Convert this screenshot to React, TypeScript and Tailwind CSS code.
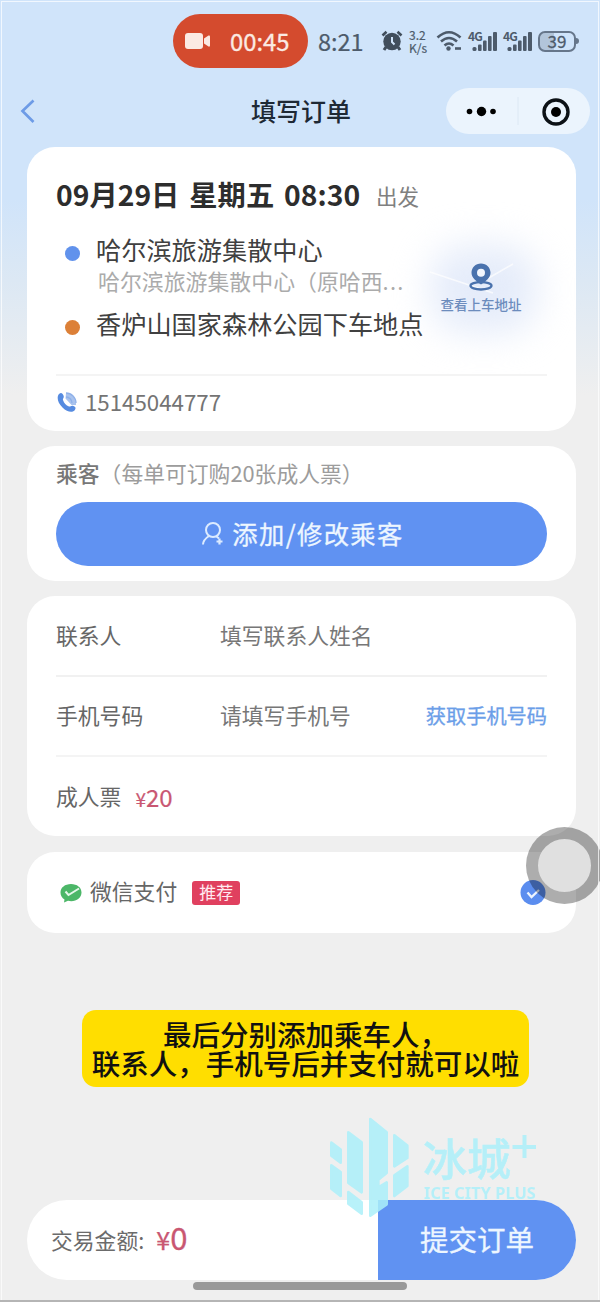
import type { ReactNode } from "react";

function Card({ className, children }: { className: string; children: ReactNode }) {
  return <section className={`w-full rounded-[28px] bg-white px-[29px] ${className}`}>{children}</section>;
}

function SignalIcon() {
  return (
    <svg className="overflow-visible" width="31" height="24" viewBox="0 0 31 24" fill="#4d5b6b">
      <text x="0" y="11.500" fontSize="12" fontWeight="700" letterSpacing="-0.8">4G</text>
      <rect x="4.500" y="18" width="4" height="4" rx="1.500" />
      <rect x="10" y="15.500" width="3.600" height="6.500" rx="1" />
      <rect x="15" y="11.500" width="3.600" height="10.500" rx="1" />
      <rect x="20" y="7" width="3.600" height="15" rx="1" />
      <rect x="25" y="3" width="4" height="19" rx="1" />
    </svg>
  );
}

function StatusBar() {
  return (
    <div className="flex h-[54px] items-center text-[#4d5b6b]">
      <div className="ml-[173px] flex h-[54px] w-[135px] items-center rounded-full bg-[#d44b2e] text-[#fbeae3]">
        <svg className="ml-[12px]" width="26" height="18" viewBox="0 0 26 18" fill="#fbeae3">
          <rect x="0" y="1" width="18" height="16" rx="3" />
          <path d="M19 6.500L23.500 3.500Q25 3 25 4.500V13.500Q25 15 23.500 14.500L19 11.500Z" />
        </svg>
        <span className="ml-[19px] text-[23.800px] leading-[54px] [-webkit-text-stroke:0.3px]">00:45</span>
      </div>
      <span className="ml-[10px] w-[63px] text-[23.500px] leading-[54px] [-webkit-text-stroke:0.2px]">8:21</span>
      <svg width="22" height="22" viewBox="0 0 22 22">
        <circle cx="11" cy="11.500" r="8.700" fill="#414e5c" />
        <path d="M1.500 5.500L5.500 1.800M20.500 5.500L16.500 1.800" stroke="#414e5c" strokeWidth="2.600" />
        <path d="M5 17L3 20M17 17L19 20" stroke="#414e5c" strokeWidth="3" />
        <path d="M11 7V12L13.500 14.500" fill="none" stroke="#d0e4fa" strokeWidth="2" />
      </svg>
      <div className="ml-[6px] w-[25px] text-[12px] leading-[13px] [-webkit-text-stroke:0.2px]">
        <div>3.2</div>
        <div>K/s</div>
      </div>
      <svg className="ml-[2px]" width="27" height="22" viewBox="0 0 27 22" fill="none" stroke="#4d5b6b" strokeWidth="2.600">
        <path d="M1.500 7.500Q13 -3 24.500 7.500" />
        <path d="M5 11.500Q13 4.500 21 11.500" />
        <path d="M8.500 15.500Q13 11.500 17.500 15.500" />
        <circle cx="12.500" cy="18.500" r="2.200" fill="#4d5b6b" stroke="none" />
        <path d="M19 18.500H25" />
      </svg>
      <div className="ml-[5px] flex gap-[4px]">
        <SignalIcon />
        <SignalIcon />
      </div>
      <div className="ml-[4px] flex h-[21px] w-[38px] items-center justify-center rounded-[7px] border-2 border-[#66768a] bg-gradient-to-r from-[#b2c5da] from-40% to-[#d0e4fa] to-40% pb-px text-[17px] leading-[18px] [-webkit-text-stroke:0.3px]">
        39
      </div>
      <div className="h-[6px] w-[3px] rounded-r bg-[#66768a]" />
    </div>
  );
}

function NavBar() {
  return (
    <div className="mt-[20px] flex h-[46px] items-center">
      <svg className="ml-[20px]" width="16" height="26" viewBox="0 0 16 26" fill="none" stroke="#6d9be6" strokeWidth="2.700">
        <path d="M13.500 2.500L2.500 13L13.500 24" />
      </svg>
      <h1 className="ml-[215px] w-[195px] pb-[2px] text-[25px] font-medium leading-[44px] text-[#1e2935]">填写订单</h1>
      <div className="flex h-[46px] w-[144px] items-center rounded-full bg-[#ebf4fd]">
        <svg width="144" height="46" viewBox="0 0 144 46">
          <circle cx="23.500" cy="23.500" r="2.800" />
          <circle cx="35.500" cy="23.500" r="4.700" />
          <circle cx="47" cy="23.500" r="2.800" />
          <path d="M72 9V37" stroke="#dce8f4" />
          <circle cx="110" cy="24" r="12" fill="none" stroke="#0c1116" strokeWidth="3.400" />
          <circle cx="110" cy="24" r="5" />
        </svg>
      </div>
    </div>
  );
}

function TripCard() {
  return (
    <Card className="relative h-[284px] pt-[27px]">
      {/* soft glow behind the pick-up map link */}
      <div className="absolute left-[403px] top-[98px] h-[88px] w-[108px] rounded-[36px] bg-[#e5ecfa] blur-[18px]" />
      <svg className="absolute left-[388px] top-[100px]" width="130" height="60" viewBox="0 0 130 60" fill="none" stroke="#ffffff" strokeWidth="1.500" opacity="0.7">
        <path d="M15 25L78 46M72 32L98 17" />
      </svg>
      <div className="relative flex h-[40px] items-center">
        <h2 className="w-[320px] whitespace-nowrap text-[28.300px] font-bold leading-[40px] text-[#2d2d2d] [word-spacing:3.500px]">09月29日 星期五 08:30</h2>
        <span className="pt-[3px] text-[21.500px] leading-[37px] text-[#808080]">出发</span>
      </div>
      <div className="relative flex">
        <div className="w-[355px]">
          <div className="mt-[18px] flex h-[34px] items-center">
            <i className="ml-[9px] mt-[9px] h-[15px] w-[15px] shrink-0 rounded-full bg-[#6192ec]" />
            <span className="ml-[16px] whitespace-nowrap text-[25.200px] leading-[34px] text-[#404040]">哈尔滨旅游集散中心</span>
          </div>
          <div className="ml-[42px] h-[30px] whitespace-nowrap text-[21.900px] leading-[30px] text-[#ababab]">
            哈尔滨旅游集散中心（原哈西<span className="tracking-[1.200px]">...</span>
          </div>
          <div className="mt-[10px] flex h-[34px] items-center">
            <i className="ml-[9px] mt-[8px] h-[15px] w-[15px] shrink-0 rounded-full bg-[#dc8038]" />
            <span className="ml-[16px] whitespace-nowrap text-[25.200px] leading-[34px] text-[#404040]">香炉山国家森林公园下车地点</span>
          </div>
        </div>
        <div className="flex w-[140px] shrink-0 flex-col items-center pt-[49px]">
          <svg width="26" height="28" viewBox="0 0 26 28">
            <ellipse cx="13" cy="22.800" rx="10.500" ry="3.700" fill="none" stroke="#4a72ad" strokeWidth="2.300" />
            <path d="M13 0.500C7.500 0.500 3.500 4.700 3.500 9.800C3.500 15 8 18 13 21.500C18 18 22.500 15 22.500 9.800C22.500 4.700 18.500 0.500 13 0.500Z" fill="#4a72ad" />
            <circle cx="13" cy="9.800" r="4" fill="#f2f6fd" />
          </svg>
          <span className="mt-[3px] text-[13.500px] font-medium leading-[20px] text-[#6c8cbd]">查看上车地址</span>
        </div>
      </div>
      <div className="relative mt-[34px] flex h-[54px] items-center border-t-2 border-[#f4f4f4]">
        <svg className="ml-[1px]" width="20" height="21" viewBox="0 0 20 21">
          <path d="M2 2C4 0 5.500 1 6.500 3.500C7.500 6 5.500 6.500 6 8C7 11 9 13.500 12 14.500C13.500 15 14 13 16.500 14C19 15 19 16.500 17.500 18.500C15 21 10 20 5.500 15.500C0.500 10.500-0.500 5 2 2Z" fill="#568be0" />
          <path d="M9 1A10 10 0 0 1 19 11V13H14.500L8.500 6.500Z" fill="#a9c3ee" />
          <path d="M9 5A6 6 0 0 1 15 11M9 1A10 10 0 0 1 19 11" fill="none" stroke="#8fb1e9" strokeWidth="1.300" />
        </svg>
        <span className="ml-[8px] pb-[2px] text-[22.300px] leading-[48px] text-[#747474]">15145044777</span>
      </div>
    </Card>
  );
}

function PassengerCard() {
  return (
    <Card className="mt-[15px] h-[135px] pt-[11px]">
      <div className="h-[32px] whitespace-nowrap text-[21.800px] leading-[32px] text-[#9c9c9c]">
        <span className="font-medium text-[#777]">乘客</span>（每单可订购20张成人票）
      </div>
      <button className="mt-[13px] flex h-[64px] w-[491px] items-center justify-center rounded-full bg-[#6092f2] text-[25.300px] tracking-[1.400px] text-[#edf6ff]">
        <svg width="24" height="26" viewBox="0 0 24 26" fill="none" stroke="#dcebff" strokeWidth="2">
          <circle cx="12" cy="9" r="7" />
          <path d="M2 23.500C2 19 5 17 8 15M15 15L18 17.500" />
          <path d="M18.500 17.500V23.500M15.500 20.500H21.500" strokeWidth="2.200" />
        </svg>
        <span className="-mr-[2px] ml-[7px] pb-[2px] leading-[62px] [-webkit-text-stroke:0.3px]">添加/修改乘客</span>
      </button>
    </Card>
  );
}

function ContactCard() {
  return (
    <Card className="mt-[15px] h-[240px] text-[21.800px]">
      <div className="flex h-[81px] items-center border-b-2 border-[#f1f1f1] text-[#666]">
        <span className="w-[164px]">联系人</span>
        <span className="text-[#777]">填写联系人姓名</span>
      </div>
      <div className="flex h-[80px] items-center border-b-2 border-[#f4f4f4] pb-[2px] text-[#666]">
        <span className="w-[164px]">手机号码</span>
        <span className="text-[#777]">请填写手机号</span>
        <button className="ml-auto pt-[2px] text-[20.200px] text-[#6b9ee8] [-webkit-text-stroke:0.3px]">获取手机号码</button>
      </div>
      <div className="flex h-[79px] items-center text-[#666]">
        <span>成人票</span>
        <span className="ml-[14px] text-[24px] text-[#c95772] [-webkit-text-stroke:0.2px]">
          <span className="text-[19px]">¥</span>20
        </span>
      </div>
    </Card>
  );
}

function PaymentCard() {
  return (
    <Card className="relative mt-[16px] flex h-[81px] items-center">
      <svg className="ml-[4px]" width="22" height="20" viewBox="0 0 22 20">
        <path d="M11 1C5 1 0.500 4.500 0.500 9.500C0.500 12.500 2 15 4.500 16.500L4 19.500L8 17.800C15 19.500 21.500 15.500 21.500 9.500C21.500 4.500 17 1 11 1Z" fill="#4cb768" />
        <path d="M5.500 8.500L8.500 12L19 5.500" fill="none" stroke="#e6f7ea" strokeWidth="2" />
      </svg>
      <span className="ml-[8px] pb-[2px] text-[21.800px] text-[#666]">微信支付</span>
      <span className="ml-[15px] flex h-[24px] w-[48px] items-center justify-center rounded-[3px] bg-[#e0405f] pb-[2px] text-[17px] leading-[22px] text-[#ffeaf0]">推荐</span>
      <svg className="ml-auto mr-px" width="26" height="26" viewBox="0 0 26 26">
        <circle cx="13" cy="12.500" r="12.500" fill="#5b8def" />
        <path d="M7.500 12.500L11.500 17L19 10" fill="none" stroke="#edf4ff" strokeWidth="2.300" />
      </svg>
      {/* assistive touch button floating over the card edge */}
      <div className="absolute left-[499px] top-[-25px] h-[77px] w-[77px] rounded-full border-[12px] border-black/32 bg-[#e0e0e0] bg-clip-padding" />
    </Card>
  );
}

function Watermark() {
  return (
    <div className="pointer-events-none absolute left-[310px] top-[1100px] h-[130px] w-[240px] opacity-85">
      <svg width="110" height="125" viewBox="0 0 330 375" fill="#acf0fa" stroke="#acf0fa" strokeWidth="8" strokeLinejoin="round">
        <path d="M64 128L92 149V188L64 167Z" />
        <path d="M64 196L92 216V288L64 266Z" />
        <path d="M115 97L155 127V277L115 249Z" />
        <path d="M115 276L155 307V341L115 311Z" />
        <path d="M181 57L230 97V219L205 239V262L230 247V313L181 347Z" />
        <path d="M253 106L292 137V174L253 199Z" />
        <path d="M253 226L292 199V258L253 288Z" />
      </svg>
      <div className="absolute left-[113px] top-[34px] text-[44px] font-medium leading-[46px] text-[#acf0fa] [-webkit-text-stroke:0.5px]">冰城</div>
      <svg className="absolute left-[202px] top-[35px]" width="24" height="24" viewBox="0 0 24 24" stroke="#acf0fa" strokeWidth="4">
        <path d="M12.500 0V23M0.500 12H24" />
      </svg>
      <div className="absolute left-[114px] top-[83px] whitespace-nowrap font-['Noto_Sans'] text-[16.400px] font-bold leading-[20px] text-[#acf0fa]">ICE CITY PLUS</div>
    </div>
  );
}

export default function App() {
  return (
    <div className="relative h-[1302px] w-[600px] overflow-hidden border-b-2 border-[#b5b5b5] bg-[linear-gradient(180deg,#d0e4fa_0px,#d0e4fa_200px,#dce8f4_280px,#efefef_395px)] pt-[14px] font-['Noto_Sans_CJK_SC',sans-serif]">
      <StatusBar />
      <NavBar />
      <main className="ml-[27px] mt-[13px] flex w-[549px] flex-col">
        <TripCard />
        <PassengerCard />
        <ContactCard />
        <PaymentCard />
      </main>
      <div className="ml-[82px] mt-[77px] h-[77px] w-[447px] rounded-[14px] bg-[#ffde00] pt-[10px] text-center text-[28.500px] font-medium leading-[28.500px] text-[#111]">
        <p>最后分别添加乘车人，</p>
        <p className="-mx-2 whitespace-nowrap">联系人，手机号后并支付就可以啦</p>
      </div>
      <footer className="ml-[27px] mt-[113px] flex h-[80px] w-[549px] items-center overflow-hidden rounded-full bg-white">
        <span className="ml-[24px] text-[21.800px] text-[#6b6b6b]">交易金额:</span>
        <span className="ml-[12px] pb-[5px] text-[#c95772] [-webkit-text-stroke:0.3px]">
          <span className="text-[25px]">¥</span>
          <span className="text-[31px]">0</span>
        </span>
        <button className="ml-auto h-[80px] w-[198px] bg-[#6092f2] pb-[3px] text-[28.500px] leading-[76px] text-[#edf6ff] [-webkit-text-stroke:0.3px]">提交订单</button>
      </footer>
      <div className="ml-[193px] mt-[2px] h-[8px] w-[214px] rounded-full bg-[#999]" />
      <Watermark />
      {/* thin frame highlights */}
      <div className="pointer-events-none absolute inset-x-[1px] bottom-0 top-[1px] border-x border-t border-white/70" />
    </div>
  );
}
